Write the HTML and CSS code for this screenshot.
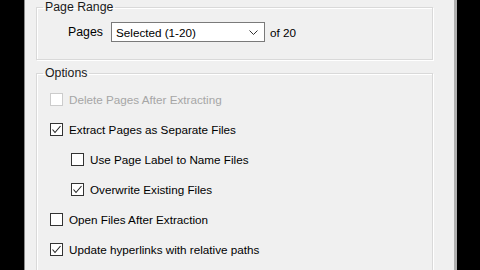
FILE: index.html
```html
<!DOCTYPE html>
<html lang="en">
<head>
    <meta charset="UTF-8">
    <title>Extract Pages</title>
    <link rel="stylesheet" href="styles.css">
</head>
<body>
    <div class="dialog">
        <!-- page range group -->
        <fieldset class="group range">
            <legend>Page Range</legend>
            <div class="range-row">
                <span class="range-label">Pages</span>
                <div class="select">
                    <span>Selected (1-20)</span>
                    <svg class="chevron" width="9" height="5" viewBox="0 0 9 5"><path d="M0.5 0.5 L4.5 4.5 L8.5 0.5" fill="none" stroke="#333" stroke-width="1"/></svg>
                </div>
                <span class="of">of 20</span>
            </div>
        </fieldset>

        <!-- options group -->
        <fieldset class="group options">
            <legend>Options</legend>
            <div class="opt disabled"><span class="box"></span>Delete Pages After Extracting</div>
            <div class="opt"><span class="box checked"></span>Extract Pages as Separate Files</div>
            <div class="opt sub"><span class="box"></span>Use Page Label to Name Files</div>
            <div class="opt sub"><span class="box checked"></span>Overwrite Existing Files</div>
            <div class="opt"><span class="box"></span>Open Files After Extraction</div>
            <div class="opt"><span class="box checked"></span>Update hyperlinks with relative paths</div>
        </fieldset>
    </div>
</body>
</html>
```

FILE: styles.css
```css
html, body {
    margin: 0;
    height: 100%;
    background: #000;
    overflow: hidden;
}
.dialog {
    margin-left: 24px;
    width: 418px;
    height: 270px;
    background: #f0f0f0;
    border-left: 1px solid #8c8c8c;
    border-right: 3px solid #b0b0b0;
    padding-left: 11px;
    font-family: "Segoe UI", "Liberation Sans", Arial, sans-serif;
    font-size: 11.7px;
    color: #000;
}
.group {
    margin: 0;
    width: 395px;
    padding: 0;
    border: 1px solid #d9d9d9;
    box-shadow: inset 1px 1px 0 #fff, 1px 1px 0 #fff;
}
.group legend {
    margin-left: 6px;
    padding: 0 2px;
    line-height: 15px;
    font-size: 12.3px;
    color: #1a1a1a;
}
.range {
    height: 58px;
}
.range-row {
    display: flex;
    align-items: center;
    margin-top: 7px;
    padding-left: 31px;
}
.range-label {
    width: 43px;
    font-size: 12.3px;
}
.select {
    display: flex;
    align-items: center;
    justify-content: space-between;
    box-sizing: border-box;
    width: 154px;
    height: 20px;
    background: #fff;
    border: 1px solid #7a7a7a;
    padding: 0 6px 0 4px;
}
.chevron {
    display: block;
}
.of {
    margin-left: 5px;
}
.options {
    margin-top: 6px;
    height: 220px;
    padding-top: 3px;
}
.opt {
    display: flex;
    align-items: center;
    height: 30px;
    padding-left: 13px;
}
.opt.sub {
    padding-left: 34px;
}
.box {
    box-sizing: border-box;
    width: 13px;
    height: 13px;
    margin-right: 6px;
    background: #fff;
    border: 1px solid #333;
    flex: none;
}
.box.checked {
    background: #fff url("data:image/svg+xml,%3Csvg xmlns='http://www.w3.org/2000/svg' width='11' height='11' viewBox='0 0 11 11'%3E%3Cpath d='M1.5 5.5 L4 8.5 L9.5 2' fill='none' stroke='%23222' stroke-width='1.1'/%3E%3C/svg%3E") no-repeat center;
}
.opt.disabled {
    color: #a6a6a6;
}
.opt.disabled .box {
    border-color: #cccccc;
}
```
